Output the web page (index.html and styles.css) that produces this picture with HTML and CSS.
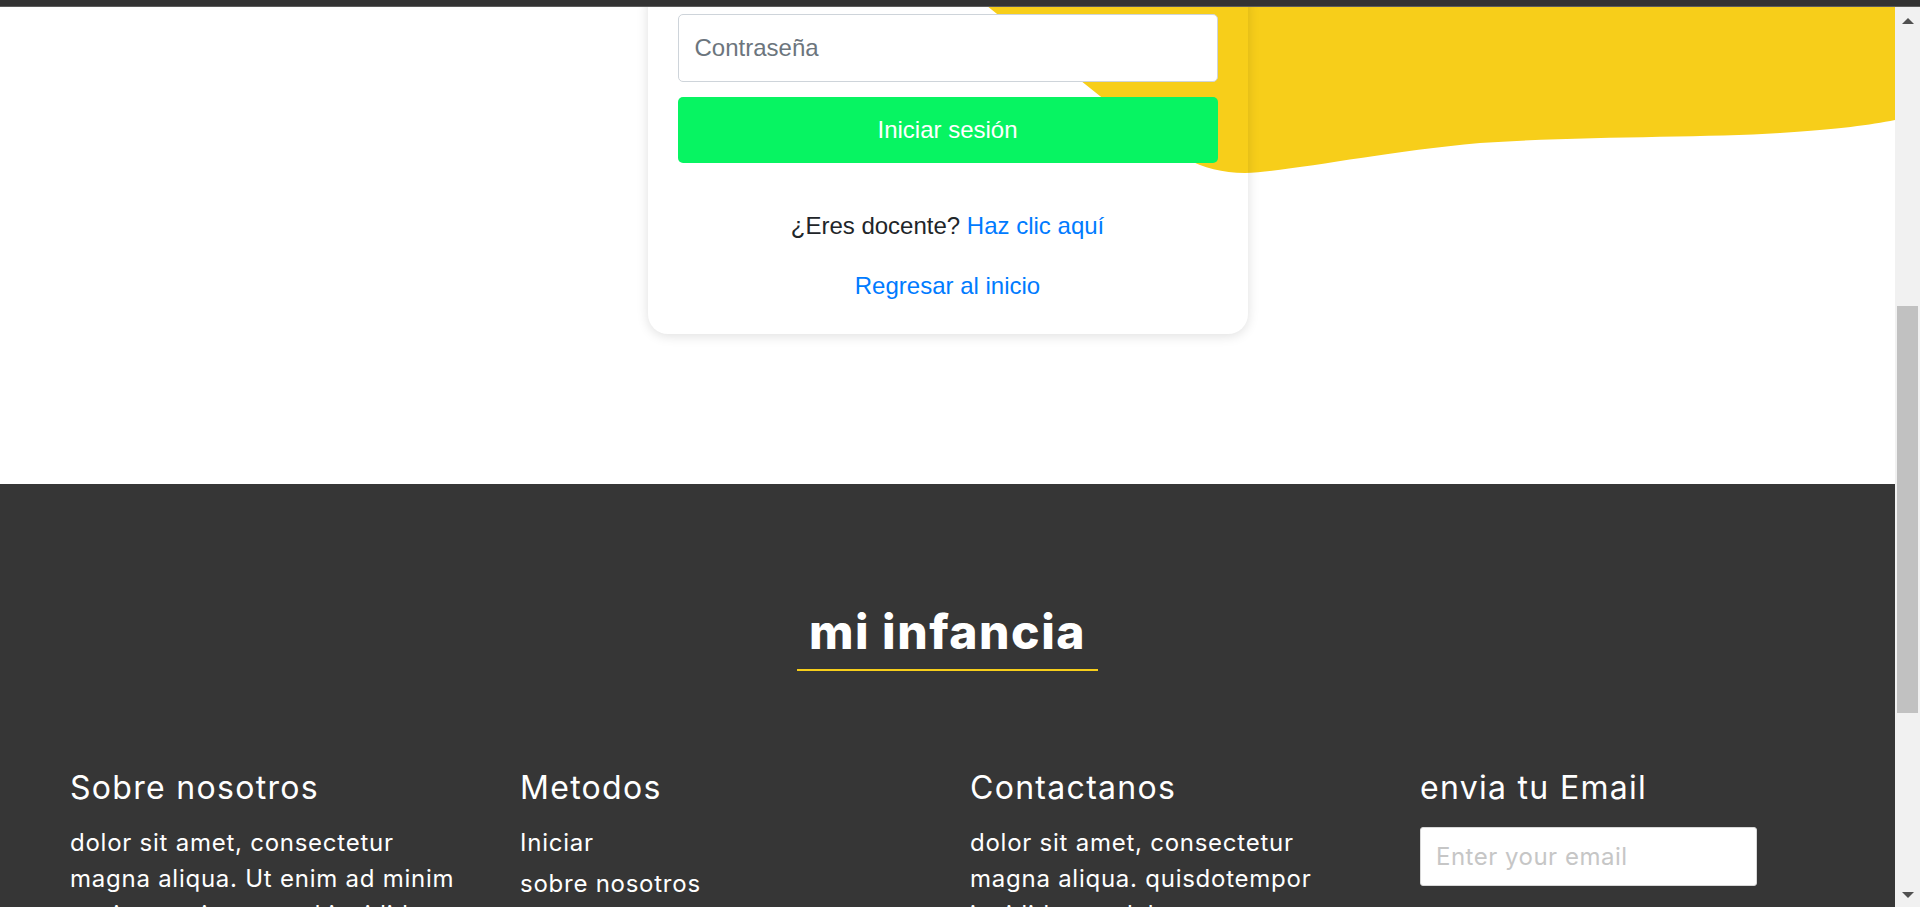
FILE: index.html
```html
<!DOCTYPE html>
<html lang="es">
<head>
<meta charset="utf-8">
<title>mi infancia - Iniciar sesión</title>
<link rel="stylesheet" href="styles.css">
</head>
<body>
<div class="topbar"></div>
<div class="viewport">
  <div class="page">
    <section class="login">
      <svg class="wave" viewBox="0 0 1895 200" preserveAspectRatio="none" aria-hidden="true">
        <path d="M 942 -30 L 1130 120 C 1170 152, 1200 173, 1245 173 C 1300 170, 1380 152, 1480 143 C 1580 136, 1700 138, 1780 133 C 1840 129, 1870 125, 1895 120 L 1895 -30 Z" fill="#f7ce1a"/>
      </svg>
      <div class="card">
        <input class="field" type="password" placeholder="Contraseña">
        <button class="btn" type="button">Iniciar sesión</button>
        <p class="note">¿Eres docente? <a href="#">Haz clic aquí</a></p>
        <p class="note back"><a href="#">Regresar al inicio</a></p>
      </div>
    </section>
    <footer class="footer">
      <div class="brand-wrap"><h2 class="brand">mi infancia</h2></div>
      <div class="cols">
        <div class="col">
          <h3 class="col-title">Sobre nosotros</h3>
          <p class="col-text">dolor sit amet, consectetur magna aliqua. Ut enim ad minim veniam, quis nostrud incididunt</p>
        </div>
        <div class="col">
          <h3 class="col-title">Metodos</h3>
          <ul class="links">
            <li>Iniciar</li>
            <li>sobre nosotros</li>
            <li>metodos</li>
          </ul>
        </div>
        <div class="col">
          <h3 class="col-title">Contactanos</h3>
          <p class="col-text">dolor sit amet, consectetur magna aliqua. quisdotempor incididunt ut labore</p>
        </div>
        <div class="col">
          <h3 class="col-title">envia tu Email</h3>
          <input class="email" type="email" placeholder="Enter your email">
        </div>
      </div>
    </footer>
  </div>
  <div class="scrollbar">
    <span class="sb-up"></span>
    <span class="sb-thumb"></span>
    <span class="sb-down"></span>
  </div>
</div>
</body>
</html>
```
FILE: styles.css
```css
* { box-sizing: border-box; }

html, body {
  margin: 0;
  height: 907px;
  overflow: hidden;
}

body {
  display: flex;
  flex-direction: column;
  background: #fff;
  font-family: "Liberation Sans", Arial, sans-serif;
}

.topbar {
  flex: none;
  height: 7px;
  background: #333333;
  border-bottom: 1px solid #5c5c5c;
}

.viewport {
  flex: 1;
  display: flex;
  min-height: 0;
}

.page {
  flex: 1;
  min-width: 0;
  display: flex;
  flex-direction: column;
  overflow: hidden;
}

/* ---------- login area ---------- */
.login {
  position: relative;
  flex: none;
  height: 477px;
  display: flex;
  justify-content: center;
  align-items: flex-start;
  overflow: hidden;
}

.wave {
  position: absolute;
  left: 0;
  top: -7px;
  width: 1895px;
  height: 200px;
}

.card {
  position: relative;
  z-index: 1;
  width: 600px;
  margin-top: -23px;
  padding: 30px;
  border-radius: 20px;
  box-shadow: 0 2px 12px rgba(0, 0, 0, 0.13);
  display: flex;
  flex-direction: column;
}

.field {
  width: 100%;
  height: 68px;
  padding: 0 16px;
  border: 1px solid #ced4da;
  border-radius: 5px;
  background: #fff;
  color: #495057;
  font: 24px "Liberation Sans", Arial, sans-serif;
}

.field::placeholder {
  color: #6c757d;
  opacity: 1;
}

.btn {
  margin-top: 15px;
  height: 66px;
  border: none;
  border-radius: 5px;
  background: #07f462;
  color: #fff;
  font: 24px "Liberation Sans", Arial, sans-serif;
}

.note {
  margin: 45px 0 0;
  font-size: 24px;
  line-height: 36px;
  text-align: center;
  color: #212529;
}

.note a {
  color: #007bff;
  text-decoration: none;
}

.note.back { margin-top: 24px; }

/* ---------- footer ---------- */
.footer {
  flex: 1;
  background: #363636;
  color: #fff;
  font-family: Inter, "Noto Sans", sans-serif;
  padding-top: 119px;
}

.brand-wrap { text-align: center; }

.brand {
  display: inline-block;
  margin: 0;
  padding: 0 12px 8px;
  font-size: 48px;
  font-weight: 800;
  line-height: 58px;
  letter-spacing: 1.5px;
  border-bottom: 2px solid #f7ce1a;
}

.cols {
  display: grid;
  grid-template-columns: repeat(4, 450px);
  padding-left: 70px;
  margin-top: 97px;
}

.col { padding-right: 50px; }

.col-title {
  margin: 0;
  font-size: 32px;
  font-weight: 400;
  line-height: 40px;
  letter-spacing: 1.3px;
}

.col-text {
  margin: 17px 0 0;
  font-size: 24px;
  line-height: 36px;
  letter-spacing: 0.75px;
}

.links {
  list-style: none;
  margin: 17px 0 0;
  padding: 0;
}

.links li {
  font-size: 24px;
  line-height: 36px;
  margin-bottom: 5px;
  letter-spacing: 0.75px;
}

.email {
  display: block;
  margin-top: 19px;
  width: 337px;
  height: 59px;
  padding: 0 15px;
  border: 1px solid #d8d8d8;
  border-radius: 3px;
  background: #fff;
  font: 24px Inter, "Noto Sans", sans-serif;
  letter-spacing: 0.5px;
}

.email::placeholder {
  color: #c6c6c6;
  opacity: 1;
}

/* ---------- scrollbar ---------- */
.scrollbar {
  flex: none;
  width: 25px;
  background: #f1f1f1;
  display: flex;
  flex-direction: column;
  align-items: center;
}

.sb-up {
  margin-top: 11px;
  width: 0;
  height: 0;
  border-left: 6px solid transparent;
  border-right: 6px solid transparent;
  border-bottom: 6px solid #505050;
}

.sb-thumb {
  margin-top: 282px;
  width: 21px;
  height: 407px;
  background: #c1c1c1;
}

.sb-down {
  margin-top: auto;
  margin-bottom: 9px;
  width: 0;
  height: 0;
  border-left: 6px solid transparent;
  border-right: 6px solid transparent;
  border-top: 6px solid #505050;
}
```
